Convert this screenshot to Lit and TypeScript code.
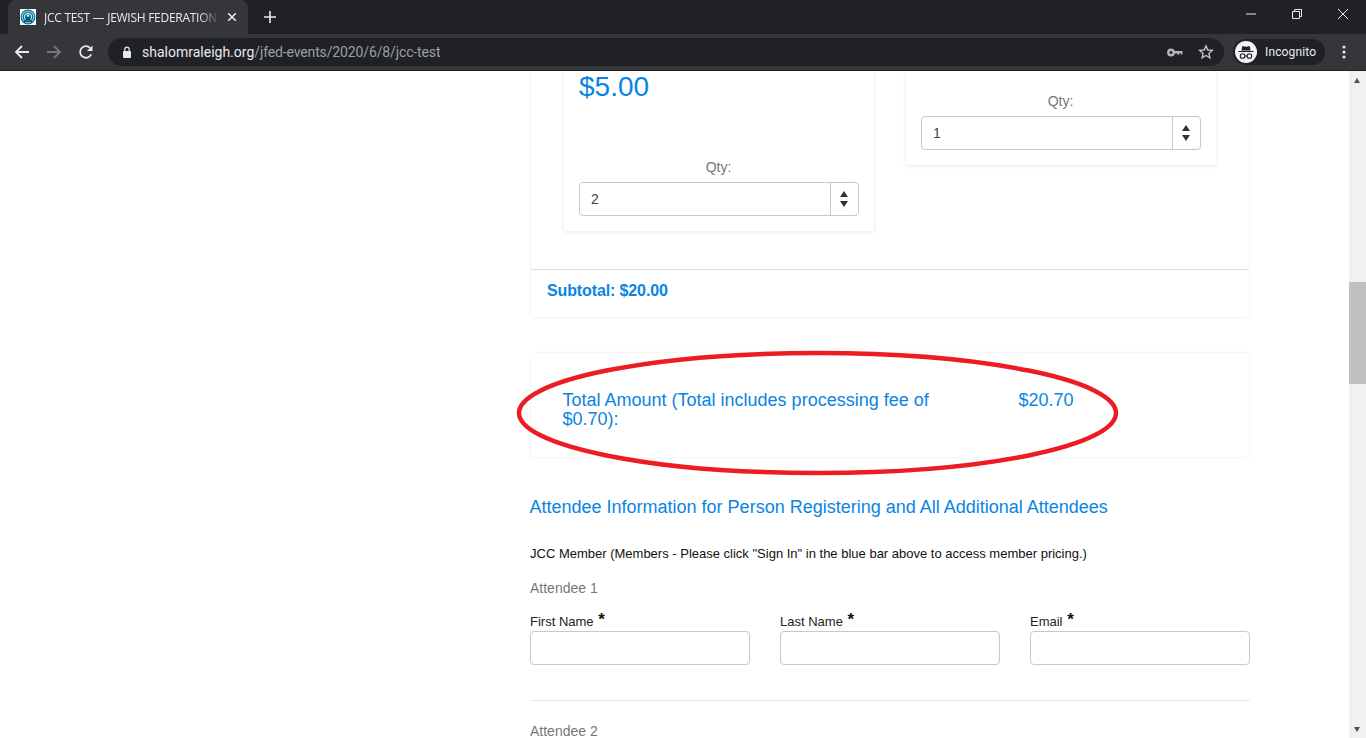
import { LitElement, html, css, svg } from "lit";
import { customElement } from "lit/decorators.js";

const spinner = (v: string) => html`
  <div class="spin">
    <span class="val">${v}</span>
    <span class="btns"><i class="up"></i><i class="down"></i></span>
  </div>`;

const field = (label: string) => html`
  <div class="field">
    <div class="flabel">${label} <b>*</b></div>
    <div class="input"></div>
  </div>`;

@customElement("app-root")
export class AppRoot extends LitElement {
  static styles = css`
    :host { display: block; width: 1366px; height: 738px; overflow: hidden; font-family: "Liberation Sans", Arial, sans-serif; background: #fff; position: relative; }
    .tabstrip { height: 34px; background: #202124; display: flex; align-items: flex-end; position: relative; }
    .tab { margin-left: 8px; width: 240px; height: 34px; background: #35363a; border-radius: 8px 8px 0 0; display: flex; align-items: center; box-sizing: border-box; padding-left: 12px; color: #e8eaed; font: 12px "Roboto", "Liberation Sans", sans-serif; }
    .tab svg.fav { width: 16px; height: 16px; margin-right: 8px; flex: none; }
    .tabtitle { width: 176px; white-space: nowrap; overflow: hidden; -webkit-mask-image: linear-gradient(90deg, #000 88%, transparent); mask-image: linear-gradient(90deg, #000 88%, transparent); font-family: "Open Sans", "Liberation Sans", sans-serif; letter-spacing: -0.27px; }
    .tab svg.x { width: 10px; height: 10px; margin-left: 7px; flex: none; }
    .plus { width: 14px; height: 14px; margin-left: 15px; margin-bottom: 10px; }
    .winbtns { margin-left: auto; display: flex; align-self: flex-start; }
    .winbtns svg { width: 46px; height: 28px; display: block; }
    .toolbar { height: 37px; background: #35363a; display: flex; align-items: center; box-sizing: border-box; border-bottom: 1px solid #1f2023; position: relative; }
    .nav { width: 16px; height: 16px; flex: none; }
    .back { margin-left: 14px; }
    .fwd, .reload { margin-left: 16px; }
    .omni { position: relative; margin-left: 14px; width: 1116px; height: 28px; background: #202124; border-radius: 14px; display: flex; align-items: center; box-sizing: border-box; padding-left: 14px; font: 14px "Roboto", "Liberation Sans", sans-serif; color: #9aa0a6; }
    .omni .lock { width: 10px; height: 12px; margin-right: 10px; flex: none; }
    .omni .host { color: #e8eaed; }
    .omni .path { letter-spacing: -0.13px; }
    .omni .right { margin-left: auto; display: flex; align-items: center; gap: 15px; padding-right: 10px; }
    .incog { margin-left: 9px; width: 92px; height: 26px; border-radius: 13px; background: #202124; display: flex; align-items: center; color: #e8eaed; font: 400 12px "Roboto", "Liberation Sans", sans-serif; letter-spacing: 0.15px; box-sizing: border-box; padding-left: 2px; flex: none; }
    .incog .av { width: 22px; height: 22px; border-radius: 50%; background: #f1f3f4; margin-right: 8px; display: flex; align-items: center; justify-content: center; }
    .dots { width: 4px; height: 14px; margin-left: 17px; flex: none; }

    .viewport { height: 667px; display: flex; position: relative; overflow: hidden; }
    .page { flex: 1; min-width: 0; padding-left: 530px; box-sizing: border-box; }
    .col { width: 720px; }
    .scrollbar { width: 17px; background: #f1f1f1; position: relative; flex: none; }
    .thumb { position: absolute; top: 211px; left: 0; width: 17px; height: 102px; background: #c1c1c1; }
    .arr { position: absolute; left: 5px; width: 0; height: 0; border-left: 3.5px solid transparent; border-right: 3.5px solid transparent; }
    .arr.t { top: 7px; border-bottom: 5px solid #505050; }
    .arr.b { bottom: 6px; border-top: 5px solid #505050; }

    .panel { background: #fff; box-shadow: 0 0 3px rgba(0,0,0,.09); border-radius: 2px; margin-left: 1px; margin-right: 1px; }
    .outer { height: 246px; clip-path: inset(0 -6px -6px -6px); }
    .products { height: 198px; display: flex; gap: 32px; padding-left: 33px; align-items: flex-start; }
    .prod { width: 310px; box-sizing: border-box; padding: 0 15px; background: #fff; box-shadow: 0 1px 4px rgba(0,0,0,.1); border-radius: 2px; }
    .prod.a { height: 160px; }
    .prod.b { height: 94px; }
    .price { color: #0a84e3; font-size: 28px; line-height: 32px; height: 88px; }
    .b .qty { margin-top: 22px; }
    .qty { text-align: center; color: #777; font-size: 14px; line-height: 16px; height: 23px; padding-right: 1px; }
    .spin { height: 34px; border: 1px solid #c8c8c8; border-radius: 4px; display: flex; align-items: center; box-sizing: border-box; color: #444; font-size: 14px; }
    .val { flex: 1; padding-left: 11px; }
    .btns { width: 28px; height: 100%; padding-right: 1px; box-sizing: border-box; border-left: 1px solid #c8c8c8; display: flex; flex-direction: column; align-items: center; justify-content: center; gap: 4px; }
    .up { border-left: 4px solid transparent; border-right: 4px solid transparent; border-bottom: 6px solid #333; }
    .down { border-left: 4px solid transparent; border-right: 4px solid transparent; border-top: 6px solid #333; }
    .subtotal { border-top: 1px solid #ddd; height: 47px; box-sizing: border-box; padding: 0 0 4px 16px; display: flex; align-items: center; color: #0a84e3; font-weight: 700; font-size: 16px; letter-spacing: -0.12px; }
    .total { margin-top: 36px; height: 104px; display: flex; box-sizing: border-box; padding: 38px 0 0 31.5px; color: #0a84e3; font-size: 18px; line-height: 19px; }
    .total .lbl { width: 395px; margin-right: 61px; }
    h2 { margin: 39px 0 0 -0.5px; font-weight: 400; color: #0a84e3; font-size: 18px; line-height: 22px; }
    .member { margin: 28px 0 0; font-size: 13px; line-height: 16px; color: #111; }
    .att { margin-top: 17px; font-size: 14px; line-height: 18px; color: #777; }
    .fields { margin-top: 17px; display: flex; gap: 30px; }
    .field { width: 220px; }
    .flabel { font-size: 13px; line-height: 15px; height: 17px; color: #222; white-space: nowrap; }
    .flabel b { font-size: 17px; line-height: 0; vertical-align: 1px; font-weight: 700; color: #111; margin-left: 1px; }
    .input { height: 34px; border: 1px solid #c8c8c8; border-radius: 4px; box-sizing: border-box; }
    hr { border: 0; border-top: 1px solid #e8e8e8; margin: 35px 0 0; }
    .att2 { margin-top: 21px; }
    .oval { position: absolute; left: 0; top: -71px; width: 1366px; height: 738px; pointer-events: none; }
  `;

  render() {
    return html`
      <div class="tabstrip">
        <div class="tab">
          <svg class="fav" viewBox="0 0 16 16">
            <rect width="16" height="16" fill="#fff"/>
            <circle cx="8" cy="8" r="7.5" fill="#12708c"/>
            <circle cx="8" cy="8" r="5.8" fill="none" stroke="#7fd3ea" stroke-width="1.1"/>
            <circle cx="8" cy="8" r="3.6" fill="none" stroke="#bfeaf5" stroke-width="1.1"/>
            <path d="M8 6v7M4 13.4L8 9l4 4.4" stroke="#0b4f66" stroke-width="1.5" fill="none"/>
            <circle cx="8" cy="6.6" r="1.2" fill="#fff"/>
          </svg>
          <div class="tabtitle">JCC TEST — JEWISH FEDERATION</div>
          <svg class="x" viewBox="0 0 10 10"><path d="M1.2 1.2l7.6 7.6M8.8 1.2L1.2 8.8" stroke="#e8eaed" stroke-width="1.6"/></svg>
        </div>
        <svg class="plus" viewBox="0 0 14 14"><path d="M7 1v12M1 7h12" stroke="#e8eaed" stroke-width="1.6"/></svg>
        <div class="winbtns">
          <svg viewBox="0 0 46 28"><path d="M18 14h10" stroke="#e8eaed" stroke-width="1"/></svg>
          <svg viewBox="0 0 46 28"><path d="M18.5 11.5h7v7h-7zM20.5 11.5v-2h7v7h-2" fill="none" stroke="#e8eaed" stroke-width="1"/></svg>
          <svg viewBox="0 0 46 28"><path d="M18 9l10 10M28 9L18 19" stroke="#e8eaed" stroke-width="1"/></svg>
        </div>
      </div>
      <div class="toolbar">
        <svg class="nav back" viewBox="0 0 16 16"><path d="M15 8H2M8 2L2 8l6 6" fill="none" stroke="#e8eaed" stroke-width="1.8"/></svg>
        <svg class="nav fwd" viewBox="0 0 16 16"><path d="M1 8h13M8 2l6 6-6 6" fill="none" stroke="#75777b" stroke-width="1.8"/></svg>
        <svg class="nav reload" viewBox="0 0 16 16"><path d="M13.2 10.4A5.8 5.8 0 1 1 12.2 4" fill="none" stroke="#e8eaed" stroke-width="1.8"/><path d="M14.5 1.5v5.6H8.9z" fill="#e8eaed"/></svg>
        <div class="omni">
          <svg class="lock" viewBox="0 0 10 12"><rect x="1" y="5" width="8" height="7" rx="1" fill="#e8eaed"/><path d="M2.8 5V3.4a2.2 2.2 0 0 1 4.4 0V5" fill="none" stroke="#e8eaed" stroke-width="1.2"/></svg>
          <span><span class="host">shalomraleigh.org</span><span class="path">/jfed-events/2020/6/8/jcc-test</span></span>
          <span class="right">
            <svg width="16" height="9" viewBox="0 0 16 9"><circle cx="4" cy="4.5" r="2.7" fill="none" stroke="#b4b6b9" stroke-width="2.4"/><path d="M6 3h9.5v3.4h-1.5V5.2h-1.6v1.6H10.6V5.6H6z" fill="#b4b6b9"/></svg>
            <svg width="16" height="16" viewBox="0 0 16 16"><path d="M8 1.9l1.8 4.1 4.5.4-3.4 3 1 4.4L8 11.5l-3.9 2.3 1-4.4-3.4-3 4.5-.4z" fill="none" stroke="#bdc1c6" stroke-width="1.4"/></svg>
          </span>
        </div>
        <div class="incog">
          <span class="av">
            <svg width="18" height="16" viewBox="0 0 18 16"><path d="M1.5 7h15v1.1h-15zM4.4 6.4l.9-4.4c2.4.9 5 .9 7.4 0l.9 4.4z" fill="#202124"/><circle cx="5.6" cy="12" r="2.3" fill="none" stroke="#202124" stroke-width="1.1"/><circle cx="12.4" cy="12" r="2.3" fill="none" stroke="#202124" stroke-width="1.1"/><path d="M7.9 12h2.2" stroke="#202124" stroke-width="1"/></svg>
          </span>Incognito
        </div>
        <svg class="dots" viewBox="0 0 4 14"><circle cx="2" cy="2" r="1.5" fill="#e8eaed"/><circle cx="2" cy="7" r="1.5" fill="#e8eaed"/><circle cx="2" cy="12" r="1.5" fill="#e8eaed"/></svg>
      </div>
      <div class="viewport">
        <div class="page">
          <div class="col">
            <div class="panel outer">
              <div class="products">
                <div class="prod a">
                  <div class="price">$5.00</div>
                  <div class="qty">Qty:</div>
                  ${spinner("2")}
                </div>
                <div class="prod b">
                  <div class="qty">Qty:</div>
                  ${spinner("1")}
                </div>
              </div>
              <div class="subtotal">Subtotal: $20.00</div>
            </div>
            <div class="panel total">
              <div class="lbl">Total Amount (Total includes processing fee of $0.70):</div>
              <div>$20.70</div>
            </div>
            <h2>Attendee Information for Person Registering and All Additional Attendees</h2>
            <p class="member">JCC Member (Members - Please click "Sign In" in the blue bar above to access member pricing.)</p>
            <div class="att">Attendee 1</div>
            <div class="fields">${field("First Name")}${field("Last Name")}${field("Email")}</div>
            <hr />
            <div class="att att2">Attendee 2</div>
          </div>
        </div>
        <div class="scrollbar">
          <div class="arr t"></div>
          <div class="thumb"></div>
          <div class="arr b"></div>
        </div>
        <svg class="oval" viewBox="0 0 1366 738">
          ${svg`<ellipse cx="817.5" cy="413" rx="298.5" ry="60" fill="none" stroke="#ed1c24" stroke-width="4.5"/>`}
        </svg>
      </div>
    `;
  }
}
